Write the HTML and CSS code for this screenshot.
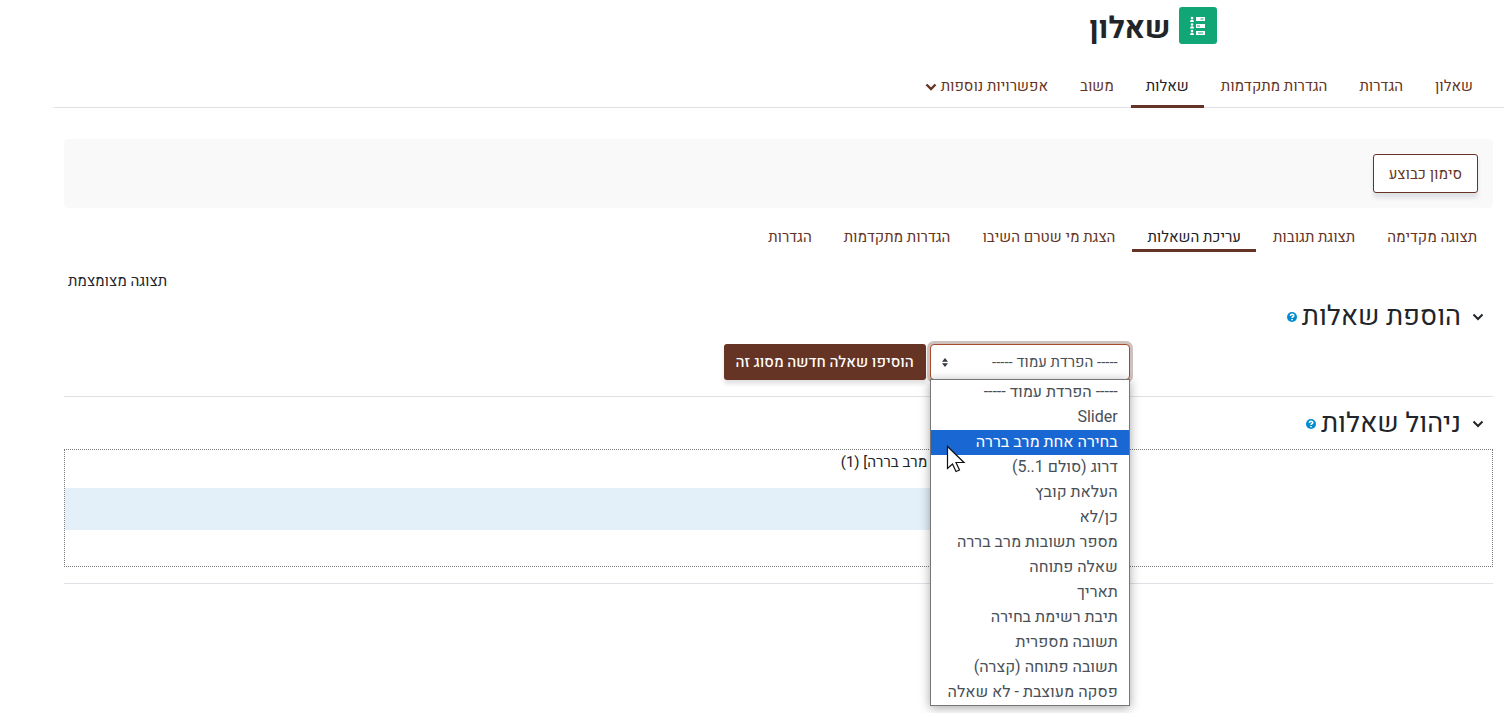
FILE: index.html
```html
<!DOCTYPE html>
<html lang="he" dir="rtl">
<head>
<meta charset="UTF-8">
<title>שאלון</title>
<link rel="stylesheet" href="styles.css">
</head>
<body>
	<header class="page-header">
		<span class="activity-icon">
			<svg width="20" height="20" viewBox="0 0 20 20" fill="#fff">
				<path d="M8 1h9v4H8zM8 8h9v4H8zM8 15h9v4H8z"/>
				<path d="M12.500 3h3M9 10h3M10 17h5" stroke="#11a676" stroke-width="1"/>
				<circle cx="4" cy="2" r="1.300"/><path d="M2 6q0-2.500 2-2.500t2 2.500z"/>
				<circle cx="4" cy="8.500" r="1.300"/><path d="M2 12.500q0-2.500 2-2.500t2 2.500z"/>
				<circle cx="4" cy="15" r="1.300"/><path d="M2 19q0-2.500 2-2.500t2 2.500z"/>
			</svg>
		</span>
		<h1>שאלון</h1>
	</header>

	<nav class="tabs main-tabs">
		<a href="#">שאלון</a>
		<a href="#">הגדרות</a>
		<a href="#">הגדרות מתקדמות</a>
		<a href="#" class="active">שאלות</a>
		<a href="#">משוב</a>
		<a href="#" class="more">אפשרויות נוספות
			<svg width="12" height="8" viewBox="0 0 12 8"><path d="M1.500 1.500 6 6l4.500-4.500" fill="none" stroke="#663424" stroke-width="2.400"/></svg>
		</a>
	</nav>

	<main>
		<div class="completion">
			<button type="button" class="btn-outline">סימון כבוצע</button>
		</div>

		<nav class="tabs sub-tabs">
			<a href="#">תצוגה מקדימה</a>
			<a href="#">תצוגת תגובות</a>
			<a href="#" class="active">עריכת השאלות</a>
			<a href="#">הצגת מי שטרם השיבו</a>
			<a href="#">הגדרות מתקדמות</a>
			<a href="#">הגדרות</a>
		</nav>

		<div class="collapse-row"><a href="#">תצוגה מצומצמת</a></div>

		<form class="questions">
			<section>
				<h3>
					<svg class="chevron" width="12" height="8" viewBox="0 0 12 8"><path d="M1.500 1.500 6 6l4.500-4.500" fill="none" stroke="#212529" stroke-width="2"/></svg>
					<label for="type">הוספת שאלות</label>
					<svg class="help" width="10" height="10" viewBox="0 0 10 10"><circle cx="5" cy="5" r="5" fill="#008bd0"/><path d="M3.300 3.800q.200-1.500 1.800-1.500t1.700 1.300q0 .800-.900 1.200-.800.400-.800 1.100M5 6.900v1.300" fill="none" stroke="#fff" stroke-width="1.600"/></svg>
				</h3>
				<div class="add-row">
					<div class="select-box">
						<select id="type">
							<option>----- הפרדת עמוד -----</option>
						</select>
						<svg class="arrows" width="6" height="9" viewBox="0 0 6 9" fill="#343a40"><path d="M0 3.700 3 0l3 3.700zM0 5.300 3 9l3-3.700z"/></svg>
						<ul class="options" role="listbox">
							<li role="option">----- הפרדת עמוד -----</li>
							<li role="option">Slider</li>
							<li role="option" class="selected">בחירה אחת מרב בררה</li>
							<li role="option">דרוג (סולם 1..5)</li>
							<li role="option">העלאת קובץ</li>
							<li role="option">כן/לא</li>
							<li role="option">מספר תשובות מרב בררה</li>
							<li role="option">שאלה פתוחה</li>
							<li role="option">תאריך</li>
							<li role="option">תיבת רשימת בחירה</li>
							<li role="option">תשובה מספרית</li>
							<li role="option">תשובה פתוחה (קצרה)</li>
							<li role="option">פסקה מעוצבת - לא שאלה</li>
						</ul>
						<svg class="cursor" width="20" height="30" viewBox="0 0 20 30"><path d="M1.500 1.500v22l5-4.500 3.500 7.500 3.500-1.500-3.500-7.500h8z" fill="#fff" stroke="#111" stroke-width="1.200"/></svg>
					</div>
					<button type="button" class="btn-add">הוסיפו שאלה חדשה מסוג זה</button>
				</div>
			</section>

			<section>
				<h3>
					<svg class="chevron" width="12" height="8" viewBox="0 0 12 8"><path d="M1.500 1.500 6 6l4.500-4.500" fill="none" stroke="#212529" stroke-width="2"/></svg>
					<span>ניהול שאלות</span>
					<svg class="help" width="10" height="10" viewBox="0 0 10 10"><circle cx="5" cy="5" r="5" fill="#008bd0"/><path d="M3.300 3.800q.200-1.500 1.800-1.500t1.700 1.300q0 .800-.900 1.200-.800.400-.800 1.100M5 6.900v1.300" fill="none" stroke="#fff" stroke-width="1.600"/></svg>
				</h3>
				<div class="manage">
					<div class="question">מרב בררה] (1)</div>
					<div class="question-text"></div>
				</div>
			</section>
		</form>
	</main>
</body>
</html>
```
FILE: styles.css
```css
*{
	box-sizing: border-box;
}
body{
	min-height: 100vh;
	margin: 0 5px 0 53px;
	background: #fff;
	color: #212529;
	font-family: Heebo, Roboto, "Open Sans", "Liberation Sans", sans-serif;
	font-size: 15px;
	line-height: 24px;
}
a{
	color: #663424;
	text-decoration: none;
}
.page-header{
	display: flex;
	align-items: flex-start;
	gap: 8px;
	max-width: 876px;
	margin: 0 auto;
	padding-top: 7px;
}
.activity-icon{
	display: flex;
	align-items: center;
	justify-content: center;
	width: 38px;
	height: 37px;
	border-radius: 3px;
	background: #11a676;
}
h1{
	margin: 0;
	padding-top: 4px;
	font-size: 30px;
	font-weight: 700;
	line-height: 37px;
}
.tabs{
	display: flex;
}
.tabs a{
	padding: 0 16px;
	border-bottom: 3px solid transparent;
	white-space: nowrap;
}
.tabs .active{
	margin: 0 1px;
	padding: 0 15px;
	color: #1d2125;
	border-color: #663424;
	border-radius: 2px 2px 0 0;
}
.main-tabs{
	margin-top: 27px;
	padding: 0 15px;
	border-bottom: 1px solid #dee2e6;
}
.main-tabs a,
.main-tabs .active{
	margin-bottom: -1px;
	padding-bottom: 7px;
	line-height: 23px;
}
main{
	padding: 0 11px;
}
.completion{
	margin-top: 31px;
	padding: 15px;
	background: #f9f9f9;
	border-radius: 4px;
}
button{
	font-family: inherit;
	font-size: 15px;
	white-space: nowrap;
}
.btn-outline{
	display: block;
	height: 39px;
	padding: 0 15px;
	color: #663424;
	background: #fff;
	border: 1px solid #663424;
	border-radius: 3px;
	box-shadow: 0 5px 4px #dfe1e4;
}
.sub-tabs{
	margin-top: 17px;
}
.collapse-row{
	display: flex;
	justify-content: flex-end;
	margin-top: 17px;
	padding: 0 4px;
}
.collapse-row a{
	color: #212529;
}
section{
	padding-bottom: 16px;
	border-bottom: 1px solid #dee2e6;
}
section + section{
	padding-top: 3px;
}
h3{
	display: flex;
	align-items: center;
	gap: 5px;
	margin: 0;
	padding: 7px 9px 8px;
	font-size: 27px;
	font-weight: 400;
	line-height: 34px;
}
.chevron{
	margin-left: 6px;
}
.add-row{
	display: flex;
	gap: 4px;
	margin-top: 2px;
	margin-right: 6px;
	padding-right: 25%;
}
.select-box{
	position: relative;
	width: 200px;
}
select{
	display: block;
	width: 100%;
	height: 36px;
	padding: 0 11px;
	color: #495057;
	background: #fff;
	border: 1px solid #a6492d;
	border-radius: 4px;
	box-shadow: 0 0 0 3px #cfc2bd;
	appearance: none;
	font-family: inherit;
	font-size: 15px;
}
.arrows{
	position: absolute;
	left: 12px;
	top: 14px;
}
.options{
	position: absolute;
	top: 35px;
	left: 0;
	z-index: 1;
	width: 200px;
	margin: 0;
	padding: 0;
	list-style: none;
	color: #495057;
	background: #fff;
	border: 1px solid #767676;
	box-shadow: 0 2px 10px rgba(0,0,0,.35);
	font-size: 16px;
}
.options li{
	height: 25px;
	padding: 0 11px;
	line-height: 25px;
	white-space: nowrap;
}
.options .selected{
	color: #fff;
	background: #1967d2;
}
.cursor{
	position: absolute;
	top: 101px;
	left: 16px;
	z-index: 2;
}
.btn-add{
	height: 36px;
	padding: 0 12px;
	color: #fff;
	background: #663424;
	border: 0;
	border-radius: 3px;
	box-shadow: 0 4px 4px #e2e2e4;
	font-weight: 500;
}
.manage{
	border: 1px dotted #777;
	padding-bottom: 36px;
}
.question{
	height: 38px;
	padding-right: calc(40% - 6px);
}
.question-text{
	height: 42px;
	margin-right: 35%;
	background: #e3f0fa;
}
```
